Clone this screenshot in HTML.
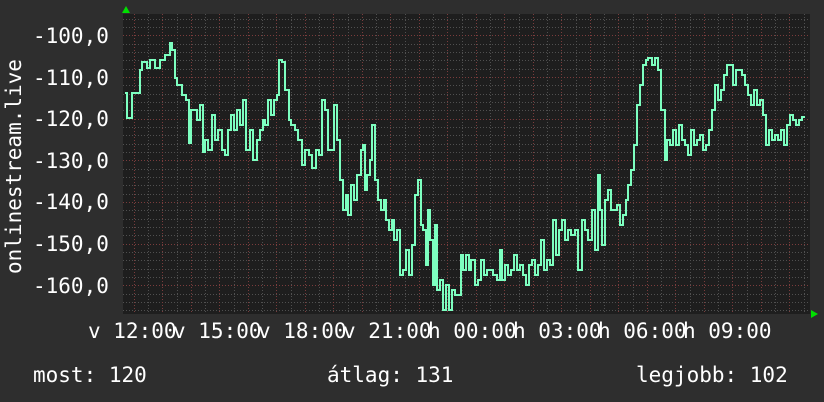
<!DOCTYPE html>
<html><head><meta charset="utf-8"><style>
html,body{margin:0;padding:0;background:#2e2e2e;}
svg{display:block}
text{font-family:"DejaVu Sans Mono","Liberation Mono",monospace;font-size:21px;fill:#ffffff}
</style></head><body>
<svg width="824" height="402" xmlns="http://www.w3.org/2000/svg">
<rect width="824" height="402" fill="#2e2e2e"/>
<rect x="123" y="14" width="687" height="300" fill="#1e1e1e"/>
<g stroke="#505050" stroke-dasharray="1,2">
<path d="M123 19.5H810M123 27.5H810M123 44.5H810M123 52.5H810M123 60.5H810M123 69.5H810M123 85.5H810M123 94.5H810M123 102.5H810M123 110.5H810M123 127.5H810M123 135.5H810M123 144.5H810M123 152.5H810M123 169.5H810M123 177.5H810M123 185.5H810M123 194.5H810M123 210.5H810M123 219.5H810M123 227.5H810M123 235.5H810M123 252.5H810M123 260.5H810M123 269.5H810M123 277.5H810M123 294.5H810M123 302.5H810M123 310.5H810"/>
<path d="M148.5 14V314M177.5 14V314M205.5 14V314M234.5 14V314M262.5 14V314M291.5 14V314M319.5 14V314M348.5 14V314M376.5 14V314M405.5 14V314M433.5 14V314M462.5 14V314M490.5 14V314M519.5 14V314M547.5 14V314M576.5 14V314M604.5 14V314M633.5 14V314M661.5 14V314M690.5 14V314M718.5 14V314M747.5 14V314M775.5 14V314M804.5 14V314"/>
</g>
<g stroke="#7a3c3c" stroke-dasharray="1,2">
<path d="M123 35.5H810M123 77.5H810M123 119.5H810M123 160.5H810M123 202.5H810M123 244.5H810M123 285.5H810"/>
<path d="M134.5 14V314M162.5 14V314M191.5 14V314M219.5 14V314M248.5 14V314M276.5 14V314M305.5 14V314M333.5 14V314M362.5 14V314M390.5 14V314M419.5 14V314M447.5 14V314M476.5 14V314M504.5 14V314M533.5 14V314M561.5 14V314M590.5 14V314M618.5 14V314M647.5 14V314M675.5 14V314M704.5 14V314M732.5 14V314M761.5 14V314M789.5 14V314"/>
</g>
<polyline fill="none" stroke="#7dffc0" stroke-width="2" stroke-linejoin="miter" points="125,93 127,93 127,118 132,118 132,93 140,93 140,70 142,70 142,62 147,62 147,68 150,68 150,60 155,60 155,68 160,68 160,60 165,60 165,55 170,55 170,43 172,43 172,50 175,50 175,78 177,78 177,85 182,85 182,95 186,95 186,100 189,100 189,143 191,143 191,110 193,110 193,110 197,110 197,120 200,120 200,105 203,105 203,152 205,152 205,140 208,140 208,150 212,150 212,115 215,115 215,140 218,140 218,130 222,130 222,150 225,150 225,155 228,155 228,130 231,130 231,115 234,115 234,130 237,130 237,110 240,110 240,125 243,125 243,100 246,100 246,150 250,150 250,130 253,130 253,160 257,160 257,140 260,140 260,130 263,130 263,120 265,120 265,125 268,125 268,100 271,100 271,115 274,115 274,100 277,100 277,95 279,95 279,60 282,60 282,62 285,62 285,90 289,90 289,120 291,120 291,125 295,125 295,130 298,130 298,140 302,140 302,165 305,165 305,150 309,150 309,155 312,155 312,168 316,168 316,150 319,150 319,155 322,155 322,100 325,100 325,110 328,110 328,150 331,150 331,150 334,150 334,105 337,105 337,140 340,140 340,180 343,180 343,210 346,210 346,195 348,195 348,215 351,215 351,185 354,185 354,200 357,200 357,175 361,175 361,150 363,150 363,145 365,145 365,190 367,190 367,175 370,175 370,160 372,160 372,125 375,125 375,180 378,180 378,200 381,200 381,210 384,210 384,200 386,200 386,220 389,220 389,230 392,230 392,220 394,220 394,240 397,240 397,230 400,230 400,275 403,275 403,270 406,270 406,250 409,250 409,275 412,275 412,245 415,245 415,195 418,195 418,180 421,180 421,225 423,225 423,230 426,230 426,265 428,265 428,210 430,210 430,240 433,240 433,285 435,285 435,225 437,225 437,290 440,290 440,280 443,280 443,310 446,310 446,285 449,285 449,310 452,310 452,290 455,290 455,295 458,295 458,295 461,295 461,255 463,255 463,270 466,270 466,255 469,255 469,270 471,270 471,260 475,260 475,285 478,285 478,280 481,280 481,260 484,260 484,275 487,275 487,270 490,270 490,270 493,270 493,275 497,275 497,280 500,280 500,250 502,250 502,280 505,280 505,265 508,265 508,275 511,275 511,270 514,270 514,255 517,255 517,270 520,270 520,265 523,265 523,275 526,275 526,285 529,285 529,265 532,265 532,260 535,260 535,275 538,275 538,265 541,265 541,240 544,240 544,270 547,270 547,260 550,260 550,265 553,265 553,220 556,220 556,255 559,255 559,230 562,230 562,220 565,220 565,240 568,240 568,230 571,230 571,235 575,235 575,230 578,230 578,270 582,270 582,220 585,220 585,230 588,230 588,240 592,240 592,210 595,210 595,250 598,250 598,175 600,175 600,210 602,210 602,245 605,245 605,200 608,200 608,190 611,190 611,210 614,210 614,210 617,210 617,205 620,205 620,225 623,225 623,215 626,215 626,200 628,200 628,185 631,185 631,170 634,170 634,145 637,145 637,105 640,105 640,85 643,85 643,65 646,65 646,60 648,60 648,58 652,58 652,65 655,65 655,58 658,58 658,70 661,70 661,110 665,110 665,160 667,160 667,140 670,140 670,145 673,145 673,130 676,130 676,145 679,145 679,125 682,125 682,140 685,140 685,145 688,145 688,155 691,155 691,130 694,130 694,145 697,145 697,140 700,140 700,135 703,135 703,150 706,150 706,145 709,145 709,130 712,130 712,110 715,110 715,85 718,85 718,100 721,100 721,90 724,90 724,75 727,75 727,65 730,65 730,65 733,65 733,85 736,85 736,70 739,70 739,70 742,70 742,75 745,75 745,85 748,85 748,95 751,95 751,105 754,105 754,90 757,90 757,105 760,105 760,100 763,100 763,115 766,115 766,145 769,145 769,130 772,130 772,140 775,140 775,135 778,135 778,140 781,140 781,130 784,130 784,145 787,145 787,125 790,125 790,115 793,115 793,120 796,120 796,125 799,125 799,120 802,120 802,117 805,117"/>
<polygon points="126,6 122,13 130,13" fill="#00e000"/>
<polygon points="818,314 811,310 811,318" fill="#00e000"/>
<g>
<text x="33" y="43">-100,0</text>
<text x="33" y="85">-110,0</text>
<text x="33" y="126">-120,0</text>
<text x="33" y="168">-130,0</text>
<text x="33" y="209">-140,0</text>
<text x="33" y="251">-150,0</text>
<text x="33" y="293">-160,0</text>
</g>
<text transform="translate(21,274) rotate(-90)">onlinestream.live</text>
<g>
<text x="88" y="338">v 12:00</text>
<text x="173" y="338">v 15:00</text>
<text x="258" y="338">v 18:00</text>
<text x="343" y="338">v 21:00</text>
<text x="428" y="338">h 00:00</text>
<text x="513" y="338">h 03:00</text>
<text x="598" y="338">h 06:00</text>
<text x="683" y="338">h 09:00</text>
</g>
<text x="33" y="382">most: 120</text>
<text x="327" y="382">átlag: 131</text>
<text x="636" y="382">legjobb: 102</text>
</svg>
</body></html>
